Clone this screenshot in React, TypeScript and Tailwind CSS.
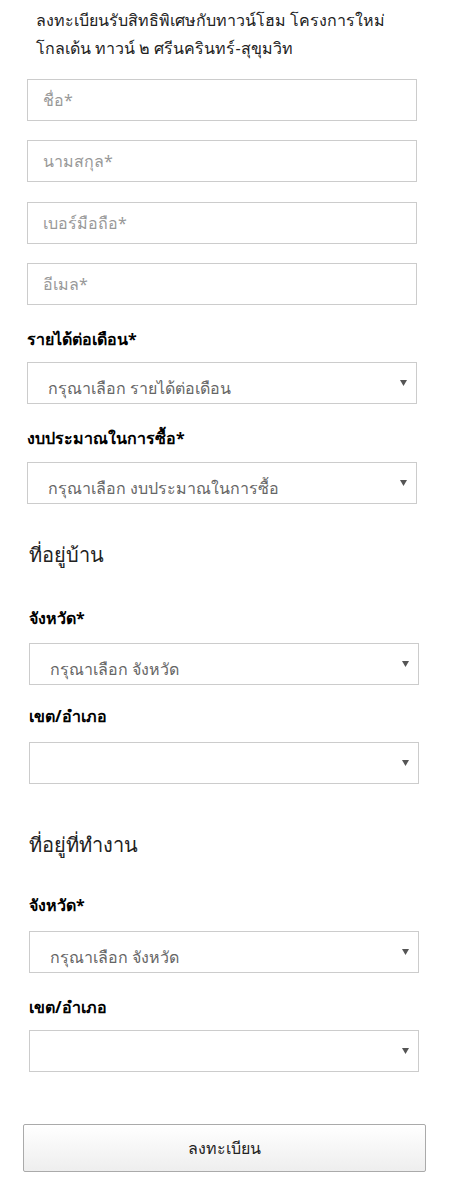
import React from "react";

const Arrow = () => (
  <svg width="7" height="6" viewBox="0 0 7 6" className="absolute right-[9px] top-1/2 -translate-y-1/2">
    <path d="M0 0 L7 0 L3.5 6 Z" fill="#555" />
  </svg>
);

const Input = ({ ph }: { ph: string }) => (
  <div className="h-[42px] w-[390px] border border-[#cccccc] bg-white flex items-center pl-[15px] text-[16px] text-[#999999]">
    {ph}
  </div>
);

const Select = ({ ph }: { ph?: string }) => (
  <div className="relative h-[42px] w-[390px] border border-[#cccccc] bg-white flex items-center pl-[20px] pt-[10px] text-[16px] text-[#666666]">
    {ph ?? ""}
    <Arrow />
  </div>
);

const Label = ({ children }: { children: React.ReactNode }) => (
  <div className="text-[16px] font-bold text-black leading-[20px]">{children}</div>
);

export default function App() {
  return (
    <div className="w-[450px] h-[1198px] bg-white" style={{ fontFamily: '"Noto Sans", "DejaVu Sans", "Liberation Sans", sans-serif' }}>
      <div className="pt-[6px] pl-[36px] text-[16px] leading-[28px] text-[#222222]">
        <div>ลงทะเบียนรับสิทธิพิเศษกับทาวน์โฮม โครงการใหม่</div>
        <div>โกลเด้น ทาวน์ ๒ ศรีนครินทร์-สุขุมวิท</div>
      </div>
      <div className="pl-[27px] pt-[17px] flex flex-col">
        <Input ph="ชื่อ*" />
        <div className="h-[19px]" />
        <Input ph="นามสกุล*" />
        <div className="h-[20px]" />
        <Input ph="เบอร์มือถือ*" />
        <div className="h-[19px]" />
        <Input ph="อีเมล*" />
        <div className="h-[24px]" />
        <Label>รายได้ต่อเดือน*</Label>
        <div className="h-[13px]" />
        <Select ph="กรุณาเลือก รายได้ต่อเดือน" />
        <div className="h-[24px]" />
        <Label>งบประมาณในการซื้อ*</Label>
        <div className="h-[14px]" />
        <Select ph="กรุณาเลือก งบประมาณในการซื้อ" />
      </div>
      <div className="pl-[29px] flex flex-col">
        <div className="h-[38px]" />
        <div className="text-[20px] leading-[26px] text-[#222222]">ที่อยู่บ้าน</div>
        <div className="h-[40px]" />
        <Label>จังหวัด*</Label>
        <div className="h-[15px]" />
        <Select ph="กรุณาเลือก จังหวัด" />
        <div className="h-[21px]" />
        <Label>เขต/อำเภอ</Label>
        <div className="h-[16px]" />
        <Select />
        <div className="h-[48px]" />
        <div className="text-[20px] leading-[26px] text-[#222222]">ที่อยู่ที่ทำงาน</div>
        <div className="h-[37px]" />
        <Label>จังหวัด*</Label>
        <div className="h-[16px]" />
        <Select ph="กรุณาเลือก จังหวัด" />
        <div className="h-[24px]" />
        <Label>เขต/อำเภอ</Label>
        <div className="h-[13px]" />
        <Select />
      </div>
      <div className="pl-[23px] pt-[52px]">
        <button className="h-[48px] w-[403px] border border-[#aaaaaa] rounded-[2px] bg-gradient-to-b from-white to-[#eeeeee] text-[16px] font-normal text-[#222222]">
          ลงทะเบียน
        </button>
      </div>
    </div>
  );
}
